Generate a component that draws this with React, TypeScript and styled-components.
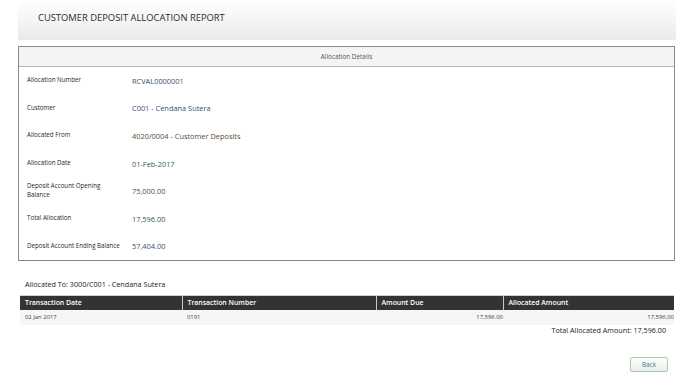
import { FunctionComponent } from 'react';
import styled, { createGlobalStyle } from 'styled-components';

const GlobalStyle = createGlobalStyle`
    html, body {
        margin: 0;
        padding: 0;
        background: #ffffff;
        font-family: 'Open Sans', 'Liberation Sans', sans-serif;
        color: #333333;
    }
`;

const Page = styled.div`
    width: 658px;
    margin-left: 18px;
`;

const Header = styled.div`
    height: 40px;
    padding-left: 20px;
    display: flex;
    align-items: flex-start;
    padding-top: 11px;
    box-sizing: border-box;
    background: linear-gradient(to bottom, #ffffff 0%, #f6f6f6 45%, #e9e9e9 100%);
`;

const Title = styled.h1`
    margin: 0;
    font-size: 9.4px;
    line-height: 14px;
    font-weight: 400;
    color: #2b2b2b;
`;

const Panel = styled.div`
    margin-top: 6px;
    width: 657px;
    border: 1px solid #8a8a8a;
    box-sizing: border-box;
`;

const PanelHeader = styled.div`
    height: 19px;
    display: flex;
    align-items: center;
    justify-content: center;
    background: #f4f4f4;
    border-bottom: 1px solid #b5b5b5;
    font-size: 6.4px;
    color: #555555;
`;

const PanelBody = styled.div`
    display: grid;
    grid-template-rows: repeat(7, 27.6px);
`;

const DetailRow = styled.div`
    display: grid;
    grid-template-columns: 105px 1fr;
    align-items: center;
    padding-left: 8px;
`;

const Label = styled.div`
    font-size: 6.2px;
    line-height: 9px;
    color: #1f1f1f;
    white-space: nowrap;
    margin-top: -2px;
`;

const Value = styled.div<{ $tone: string }>`
    font-size: 7.4px;
    color: ${(p) => p.$tone};
`;

const AllocatedTo = styled.div`
    margin: 18px 0 0 7px;
    font-size: 7.2px;
    color: #222222;
`;

const Table = styled.table`
    margin: 6px 0 0 2px;
    width: 654px;
    border-collapse: collapse;
    table-layout: fixed;
`;

const Th = styled.th<{ $w: number }>`
    box-sizing: border-box;
    width: ${(p) => p.$w}px;
    height: 14px;
    padding: 0 0 0 5px;
    background: #333333;
    color: #ffffff;
    font-size: 6.9px;
    font-weight: 600;
    text-align: left;
    border-top: 1px solid #d0d0d0;
    border-left: 1px solid #c8c8c8;
    &:first-child {
        border-left: none;
    }
`;

const Td = styled.td<{ $right?: boolean }>`
    height: 15px;
    padding: 0 ${(p) => (p.$right ? '0' : '5px')};
    background: #f6f6f6;
    font-size: 5.9px;
    color: #3a3a3a;
    text-align: ${(p) => (p.$right ? 'right' : 'left')};
`;

const Total = styled.div`
    text-align: right;
    padding-right: 10px;
    margin-top: 0;
    font-size: 7.2px;
    color: #222222;
`;

const Footer = styled.div`
    display: flex;
    justify-content: flex-end;
    padding-right: 8px;
    margin-top: 22px;
`;

const BackButton = styled.button`
    width: 38px;
    height: 15px;
    padding: 0;
    border: 1px solid #a3cfa3;
    border-radius: 2px;
    background: linear-gradient(to bottom, #ffffff, #ececec);
    color: #3b7c7c;
    font-family: inherit;
    font-size: 6.4px;
    cursor: pointer;
`;

const details = [
    { label: 'Allocation Number', value: 'RCVAL0000001', tone: '#3a4f6e' },
    { label: 'Customer', value: 'C001 - Cendana Sutera', tone: '#344f73' },
    { label: 'Allocated From', value: '4020/0004 - Customer Deposits', tone: '#5e4a37' },
    { label: 'Allocation Date', value: '01-Feb-2017', tone: '#2f5e5e' },
    { label: 'Deposit Account Opening\nBalance', value: '75,000.00', tone: '#3b4f6c' },
    { label: 'Total Allocation', value: '17,596.00', tone: '#2f5a58' },
    { label: 'Deposit Account Ending Balance', value: '57,404.00', tone: '#34506e' },
];

const App: FunctionComponent = () => {
    return (
        <Page>
            <GlobalStyle />
            <Header>
                <Title>CUSTOMER DEPOSIT ALLOCATION REPORT</Title>
            </Header>
            <Panel>
                <PanelHeader>Allocation Details</PanelHeader>
                <PanelBody>
                    {details.map((d) => (
                        <DetailRow key={d.label}>
                            <Label>
                                {d.label.split('\n').map((line, i) => (
                                    <div key={i}>{line}</div>
                                ))}
                            </Label>
                            <Value $tone={d.tone}>{d.value}</Value>
                        </DetailRow>
                    ))}
                </PanelBody>
            </Panel>
            <AllocatedTo>Allocated To: 3000/C001 - Cendana Sutera</AllocatedTo>
            <Table>
                <thead>
                    <tr>
                        <Th $w={162}>Transaction Date</Th>
                        <Th $w={194}>Transaction Number</Th>
                        <Th $w={127}>Amount Due</Th>
                        <Th $w={171}>Allocated Amount</Th>
                    </tr>
                </thead>
                <tbody>
                    <tr>
                        <Td>02 Jan 2017</Td>
                        <Td>0191</Td>
                        <Td $right>17,596.00</Td>
                        <Td $right>17,596.00</Td>
                    </tr>
                </tbody>
            </Table>
            <Total>Total Allocated Amount: 17,596.00</Total>
            <Footer>
                <BackButton>Back</BackButton>
            </Footer>
        </Page>
    );
};

export default App;
